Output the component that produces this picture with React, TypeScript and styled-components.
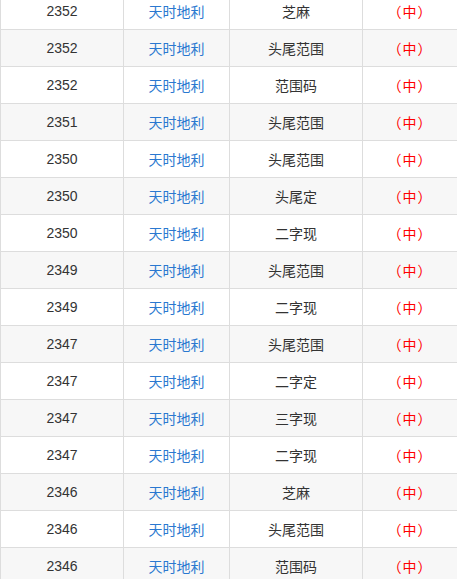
import React from "react";
import styled, { createGlobalStyle } from "styled-components";

const Global = createGlobalStyle`
  html, body { margin: 0; padding: 0; background: #fff; overflow: hidden; }
  body { font-family: "Noto Sans CJK SC", "Noto Sans", sans-serif; }
`;

const Wrap = styled.div`
  width: 457px;
  margin-top: -8px;
`;

const Table = styled.table`
  width: 457px;
  border-collapse: collapse;
  table-layout: fixed;
  border-left: 1px solid #dddddd;
  border-right: 1px solid #dddddd;
`;

const Col = styled.col<{ $w: number }>`
  width: ${(p) => p.$w}px;
`;

const Row = styled.tr<{ $alt: boolean }>`
  background: ${(p) => (p.$alt ? "#f7f7f7" : "#ffffff")};
`;

const Cell = styled.td`
  height: 36px;
  padding: 0;
  border: 1px solid #dddddd;
  text-align: center;
  vertical-align: middle;
  font-size: 14px;
  line-height: 20px;
`;

const NumCell = styled(Cell)`
  font-family: "Liberation Sans Narrow", "Liberation Sans", sans-serif;
  font-size: 14px;
  color: #333333;
`;

const LinkCell = styled(Cell)`
  color: #2a78d0;
`;

const TypeCell = styled(Cell)`
  color: #333333;
`;

const ResultCell = styled(Cell)`
  color: #ff0000;
  letter-spacing: 1px;
`;

const rows: [string, string][] = [
  ["2352", "芝麻"],
  ["2352", "头尾范围"],
  ["2352", "范围码"],
  ["2351", "头尾范围"],
  ["2350", "头尾范围"],
  ["2350", "头尾定"],
  ["2350", "二字现"],
  ["2349", "头尾范围"],
  ["2349", "二字现"],
  ["2347", "头尾范围"],
  ["2347", "二字定"],
  ["2347", "三字现"],
  ["2347", "二字现"],
  ["2346", "芝麻"],
  ["2346", "头尾范围"],
  ["2346", "范围码"],
];

export default function App() {
  return (
    <Wrap>
      <Global />
      <Table>
        <colgroup>
          <Col $w={123} />
          <Col $w={106} />
          <Col $w={133} />
          <Col $w={95} />
        </colgroup>
        <tbody>
          {rows.map(([n, t], i) => (
            <Row key={i} $alt={i % 2 === 1}>
              <NumCell>{n}</NumCell>
              <LinkCell>天时地利</LinkCell>
              <TypeCell>{t}</TypeCell>
              <ResultCell>（中）</ResultCell>
            </Row>
          ))}
        </tbody>
      </Table>
    </Wrap>
  );
}
